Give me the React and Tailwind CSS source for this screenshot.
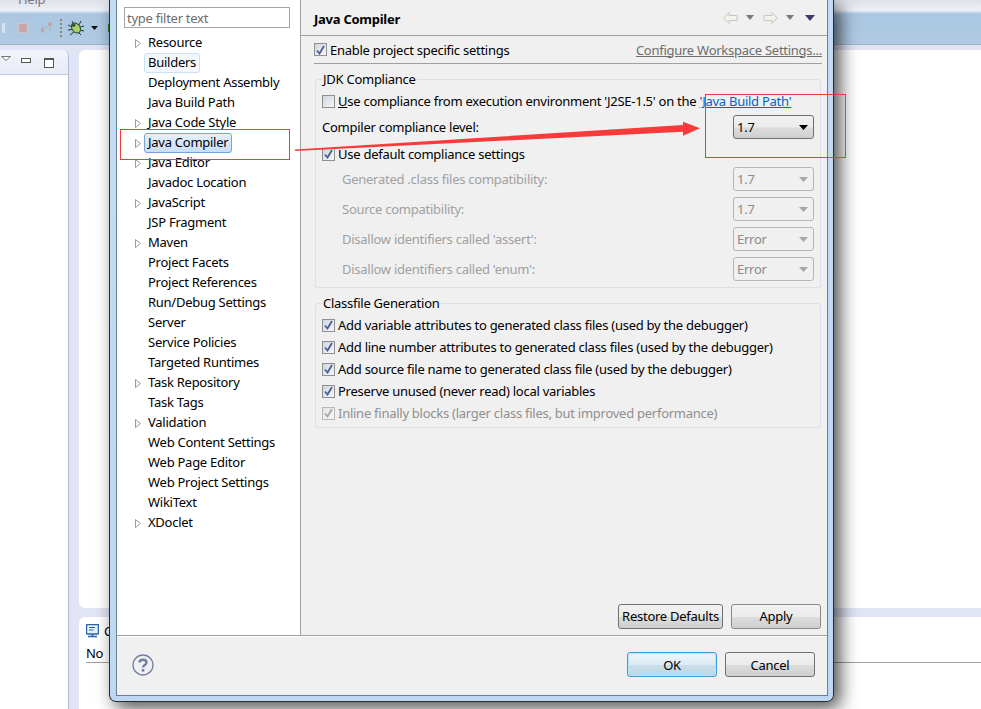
const treeItems = [
    { label: 'Resource', arrow: true },
    { label: 'Builders', sel: 'soft' },
    { label: 'Deployment Assembly' },
    { label: 'Java Build Path' },
    { label: 'Java Code Style', arrow: true },
    { label: 'Java Compiler', arrow: true, sel: 'strong' },
    { label: 'Java Editor', arrow: true },
    { label: 'Javadoc Location' },
    { label: 'JavaScript', arrow: true },
    { label: 'JSP Fragment' },
    { label: 'Maven', arrow: true },
    { label: 'Project Facets' },
    { label: 'Project References' },
    { label: 'Run/Debug Settings' },
    { label: 'Server' },
    { label: 'Service Policies' },
    { label: 'Targeted Runtimes' },
    { label: 'Task Repository', arrow: true },
    { label: 'Task Tags' },
    { label: 'Validation', arrow: true },
    { label: 'Web Content Settings' },
    { label: 'Web Page Editor' },
    { label: 'Web Project Settings' },
    { label: 'WikiText' },
    { label: 'XDoclet', arrow: true },
];

const comboRows = [
    { label: 'Generated .class files compatibility:', value: '1.7' },
    { label: 'Source compatibility:', value: '1.7' },
    { label: "Disallow identifiers called 'assert':", value: 'Error' },
    { label: "Disallow identifiers called 'enum':", value: 'Error' },
];

const classfileRows = [
    'Add variable attributes to generated class files (used by the debugger)',
    'Add line number attributes to generated class files (used by the debugger)',
    'Add source file name to generated class file (used by the debugger)',
    'Preserve unused (never read) local variables',
];

const greyButton = 'bg-[linear-gradient(#f2f2f2_0%,#ebebeb_50%,#dcdcdc_54%,#cfcfcf_100%)]';

function Checkbox({ checked, disabled }) {
    return (
        <span className={`flex h-[13px] w-[13px] shrink-0 items-center justify-center border bg-gradient-to-br ${disabled ? 'border-[#b8b8b8] from-[#e6e6e6] to-[#f6f6f6]' : 'border-[#8e8f8f] from-[#cfd5e0] to-[#f6f7f9]'}`}>
            {checked && (
                <svg width="9" height="10" viewBox="0 0 9 10">
                    <path d="M1 5.5 L3.5 8.5 L8 1" fill="none" stroke={disabled ? '#a8a8a8' : '#4a5f97'} strokeWidth="1.8" />
                </svg>
            )}
        </span>
    );
}

function Combo({ value, disabled }) {
    return (
        <div className={`flex h-[24px] w-[81px] items-center justify-between rounded-[3px] border pl-[3px] pr-[3px] ${disabled ? 'border-[#b5b5b5] text-[#8a8a8a]' : `border-[#707070] text-black ${greyButton}`}`}>
            <span>{value}</span>
            <svg width="9" height="5" viewBox="0 0 9 5" className="mr-[2px]">
                <path d="M0 0 H9 L4.5 5 Z" fill={disabled ? '#a6a6a6' : '#000'} />
            </svg>
        </div>
    );
}

function PushButton({ children, className }) {
    return (
        <button className={`flex h-[25px] items-center justify-center rounded-[3px] border ${className}`}>
            {children}
        </button>
    );
}

function Group({ title, className, children }) {
    return (
        <div className={`relative rounded-[3px] border border-[#d9e0e6] ${className}`}>
            <span className="absolute left-[6px] top-[-10px] bg-[#f0f0f0] px-[1px] leading-[18px]">{title}</span>
            {children}
        </div>
    );
}

function Workbench() {
    return (
        <div className="flex h-[709px] flex-col overflow-hidden bg-[#e1e4f4]">
            <div className="h-[10px] bg-gradient-to-b from-[#dfe1ea] to-[#eef0f6] pl-[18px] text-[#7a7a7a]">
                <span className="relative top-[-10px] block leading-[18px]">Help</span>
            </div>
            <div className="flex h-[35px] items-center border-b border-[#9fb3c8] bg-gradient-to-b from-[#f0f4f9] via-[#aac6e1] via-[12%] to-[#b0cbe3] pl-[2px] pt-[2px]">
                <span className="h-[10px] w-[3px] bg-[#d8e2ea]" />
                <span className="ml-[13px] h-[10px] w-[10px] border border-[#d6c4c8] bg-[#c9a6aa]" />
                <svg width="13" height="14" viewBox="0 0 13 14" className="ml-[12px]">
                    <path d="M2.5 9.5 V5 M2.5 9.5 L10 3 M10 3 V9" fill="none" stroke="#a8b0b8" />
                    <circle cx="2.5" cy="9.5" r="2" fill="#c4a4a8" />
                    <circle cx="10" cy="3" r="2" fill="#c4a4a8" />
                </svg>
                <span className="ml-[7px] h-[18px] border-l-2 border-dotted border-[#8a8a6a]" />
                <svg width="16" height="16" viewBox="0 0 16 16" className="ml-[6px]">
                    <path d="M4 1 L6 5 M0 5 L4 7 M0 10 L4 9.5 M2 15 L6 12 M13 1 L11 5 M16 6 L12 7 M16 11 L12 10 M13 15 L10 12" stroke="#1f3a30" fill="none" />
                    <ellipse cx="8" cy="8" rx="4" ry="5.5" transform="rotate(-35 8 8)" fill="#a9cf6a" stroke="#2f5238" />
                    <circle cx="5.5" cy="5" r="2" fill="#31543c" />
                </svg>
                <svg width="7" height="4" viewBox="0 0 7 4" className="ml-[7px]">
                    <path d="M0 0 H7 L3.5 4 Z" fill="#111" />
                </svg>
                <span className="ml-[10px] h-[8px] w-[4px] bg-[#3f7a35]" />
            </div>
            <div className="flex min-h-0 flex-1 pt-[5px]">
                <div className="w-[69px] shrink-0 rounded-tr-[6px] border-r border-[#b4b9d6] bg-white">
                    <div className="flex h-[25px] items-start rounded-tr-[6px] border-b border-[#c3c8de] bg-gradient-to-b from-[#f2f4fa] to-[#e9ecf6] pl-[1px] pt-[6px]">
                        <svg width="10" height="5" viewBox="0 0 10 5">
                            <path d="M0.5 0.5 H9.5 L5 4.5 Z" fill="#fff" stroke="#777" />
                        </svg>
                        <span className="ml-[10px] mt-[2px] h-[5px] w-[10px] border border-[#555] bg-white" />
                        <span className="ml-[13px] mt-[2px] h-[10px] w-[10px] border border-[#555] border-t-2 bg-white" />
                    </div>
                </div>
                <div className="ml-[10px] flex min-w-0 flex-1 flex-col">
                    <div className="h-[558px] rounded-l-[6px] bg-white" />
                    <div className="mt-[9px] min-h-0 flex-1 rounded-tl-[6px] bg-white pl-[7px] pt-[5px]">
                        <div className="flex h-[17px] items-center gap-[5px]">
                            <svg width="13" height="14" viewBox="0 0 13 14">
                                <rect x="0.5" y="0.5" width="12" height="9.5" rx="1" fill="#e8f0fa" stroke="#2a62a8" strokeWidth="1.4" />
                                <path d="M3 3.5 H9 M3 6 H7.5" stroke="#2a62a8" />
                                <path d="M2 12.5 H11 M6.5 10 V12.5" stroke="#2a62a8" strokeWidth="1.4" />
                            </svg>
                            <span>Console</span>
                        </div>
                        <div className="mt-[5px] h-[19px] border-b border-[#a0a0a0] leading-[19px] text-black">No</div>
                    </div>
                </div>
            </div>
        </div>
    );
}

function Tree() {
    return (
        <div className="flex w-[184px] shrink-0 flex-col border-r border-[#a0a0a0] bg-white">
            <div className="ml-[7px] mt-[7px] flex h-[21px] w-[166px] items-center border border-[#a5a5a5] pl-[2px] text-[#6d6d6d]">type filter text</div>
            <ul className="mt-[5px]">
                {treeItems.map((item) => (
                    <li key={item.label} className="flex h-[20px] items-center">
                        <span className="flex w-[27px] shrink-0 justify-end pr-[3px]">
                            {item.arrow && (
                                <svg width="6" height="9" viewBox="0 0 6 9">
                                    <path d="M0.5 0.5 L5.5 4.5 L0.5 8.5 Z" fill="#fff" stroke="#9a9a9a" />
                                </svg>
                            )}
                        </span>
                        <span className={`flex h-[20px] items-center rounded-[3px] border px-[3px] pb-[2px] ${item.sel === 'strong' ? 'border-[#7da2ce] bg-gradient-to-b from-[#e6f0fb] to-[#c9def5]' : item.sel === 'soft' ? 'border-[#c9e0f7] bg-[#f3f8fe]' : 'border-transparent'}`}>
                            {item.label}
                        </span>
                    </li>
                ))}
            </ul>
        </div>
    );
}

function Preferences() {
    return (
        <div className="flex min-w-0 flex-1 flex-col bg-[#f0f0f0] pl-[13px] pr-[5px]">
            <div className="-ml-[13px] -mr-[5px] flex h-[36px] shrink-0 items-center justify-between border-b border-[#a0a0a0] pl-[13px] pr-[12px] pt-[3px]">
                <span className="font-bold">Java Compiler</span>
                <div className="-mt-[3px] flex items-center">
                    <svg width="15" height="12" viewBox="0 0 15 12">
                        <path d="M6 0.5 L0.8 6 L6 11.5 V8.5 H14 V3.5 H6 Z" fill="#f3f3ec" stroke="#c4c8c0" />
                    </svg>
                    <svg width="8" height="5" viewBox="0 0 8 5" className="ml-[8px]"><path d="M0 0 H8 L4 5 Z" fill="#777" /></svg>
                    <svg width="15" height="12" viewBox="0 0 15 12" className="ml-[9px]">
                        <path d="M9 0.5 L14.2 6 L9 11.5 V8.5 H1 V3.5 H9 Z" fill="#f3f3ec" stroke="#c4c8c0" />
                    </svg>
                    <svg width="8" height="5" viewBox="0 0 8 5" className="ml-[8px]"><path d="M0 0 H8 L4 5 Z" fill="#777" /></svg>
                    <svg width="10" height="6" viewBox="0 0 10 6" className="ml-[11px]"><path d="M0 0 H10 L5 6 Z" fill="#3d3a66" /></svg>
                </div>
            </div>
            <div className="flex h-[28px] shrink-0 items-center justify-between border-b border-[#a0a0a0]">
                <label className="flex items-center gap-[3px]">
                    <Checkbox checked />
                    <span>Enable project specific settings</span>
                </label>
                <span className="text-[#6d6d6d] underline">Configure Workspace Settings...</span>
            </div>
            <Group title="JDK Compliance" className="mx-[1px] mt-[15px] h-[209px] shrink-0 pl-[6px] pr-[6px] pt-[11px]">
                <div className="flex h-[20px] items-center gap-[3px]">
                    <Checkbox />
                    <span><u>U</u>se compliance from execution environment 'J2SE-1.5' on the <span className="text-[#0066cc] underline">'Java Build Path'</span></span>
                </div>
                <div className="mt-[3px] flex h-[26px] items-center justify-between">
                    <span>Compiler compliance level:</span>
                    <Combo value="1.7" />
                </div>
                <div className="mt-[4px] flex h-[20px] items-center gap-[3px]">
                    <Checkbox checked />
                    <span>Use default compliance settings</span>
                </div>
                <div className="mt-[3px] flex flex-col gap-[6px]">
                    {comboRows.map((row) => (
                        <div key={row.label} className="flex h-[24px] items-center justify-between pl-[20px] text-[#a0a0a0]">
                            <span>{row.label}</span>
                            <Combo value={row.value} disabled />
                        </div>
                    ))}
                </div>
            </Group>
            <Group title="Classfile Generation" className="mx-[1px] mt-[15px] h-[125px] shrink-0 pl-[6px] pt-[10px]">
                {classfileRows.map((row) => (
                    <div key={row} className="flex h-[22px] items-center gap-[3px]">
                        <Checkbox checked />
                        <span>{row}</span>
                    </div>
                ))}
                <div className="flex h-[22px] items-center gap-[3px] text-[#8f8f8f]">
                    <Checkbox checked disabled />
                    <span>Inline finally blocks (larger class files, but improved performance)</span>
                </div>
            </Group>
            <div className="mt-auto flex justify-end gap-[8px] pb-[6px] pr-[1px]">
                <PushButton className={`w-[105px] border-[#707070] pb-[2px] ${greyButton}`}>Restore Defaults</PushButton>
                <PushButton className={`w-[90px] border-[#8a8a8a] pb-[2px] ${greyButton}`}>Apply</PushButton>
            </div>
        </div>
    );
}

function Dialog() {
    return (
        <div className="absolute left-[109px] top-0 h-[702px] w-[725px] rounded-b-[7px] border border-t-0 border-[#2b2b2b] bg-gradient-to-b from-[#c3dcf5] to-[#bcd8f3] px-[6px] pb-[5px] pr-[5px] shadow-[6px_6px_18px_rgba(0,0,0,0.7)]">
            <div className="flex h-full flex-col border border-t-0 border-[#6f7f8f] bg-[#f0f0f0]">
                <div className="flex h-[636px] shrink-0 border-b border-[#a0a0a0]">
                    <Tree />
                    <Preferences />
                </div>
                <div className="flex min-h-0 flex-1 items-center justify-between border-t border-white pb-[3px] pl-[15px] pr-[12px]">
                    <svg width="22" height="22" viewBox="0 0 22 22">
                        <circle cx="11" cy="11" r="10" fill="none" stroke="#6f7f9f" strokeWidth="1.3" />
                        <path d="M7.5 8.5 C7.5 4.8 14.5 4.8 14.5 8.5 C14.5 11 11 10.8 11 13.5" fill="none" stroke="#6f7f9f" strokeWidth="2.4" />
                        <rect x="9.7" y="15" width="2.6" height="2.6" fill="#6f7f9f" />
                    </svg>
                    <div className="flex gap-[8px]">
                        <PushButton className="w-[90px] border-[#3c9fd8] bg-[linear-gradient(#eef6fb_0%,#dcebf4_50%,#c9dfeb_54%,#bcd6e4_100%)] shadow-[inset_0_0_0_1px_#b9e4f9]">OK</PushButton>
                        <PushButton className={`w-[90px] border-[#707070] ${greyButton}`}>Cancel</PushButton>
                    </div>
                </div>
            </div>
        </div>
    );
}

export default function App() {
    return (
        <div className="relative h-[709px] w-[981px] overflow-hidden bg-white font-['Noto_Sans',sans-serif] text-[13px] leading-[18px] tracking-[-0.26px] text-black">
            <Workbench />
            <Dialog />
            {/* screenshot annotations */}
            <div className="absolute left-[120px] top-[129px] h-[31px] w-[170px] border border-[#ee3b3b]" />
            <div className="absolute left-[705px] top-[94px] h-[64px] w-[141px] border border-[#ee3b3b]" />
            <svg className="absolute left-[290px] top-[115px]" width="415" height="40" viewBox="0 0 415 40">
                <path d="M5 34.5 L393 10 L393 6.7 L410 13.3 L393 20.7 L393 16.7 L5 36 Z" fill="#f83a3a" />
            </svg>
        </div>
    );
}
